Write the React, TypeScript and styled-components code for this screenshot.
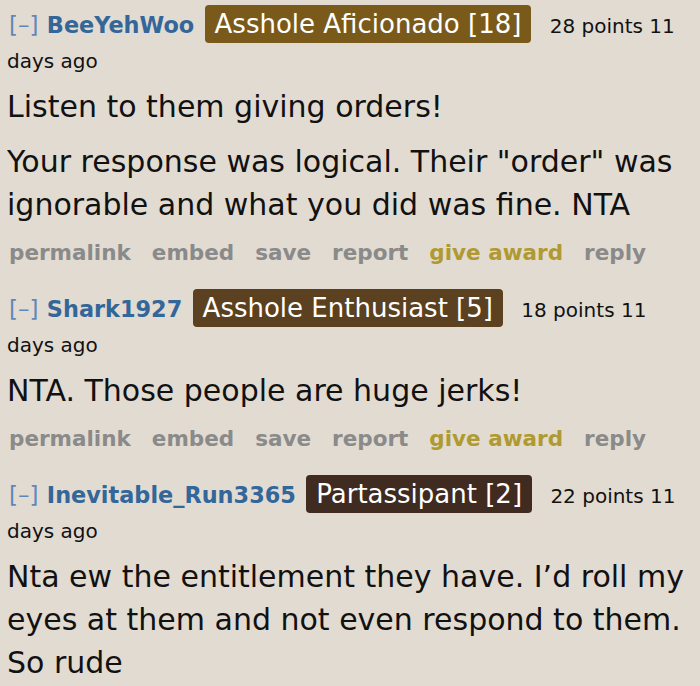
import React from "react";
import styled, { createGlobalStyle } from "styled-components";

const GlobalStyle = createGlobalStyle`
  html, body {
    margin: 0;
    padding: 0;
    background: #e2dbd1;
  }
  body {
    font-family: "DejaVu Sans", Verdana, sans-serif;
    color: #111;
  }
`;

type CommentData = {
  user: string;
  flair: string;
  flairColor: string;
  points: number;
  body: string[];
  showActions: boolean;
};

const comments: CommentData[] = [
  {
    user: "BeeYehWoo",
    flair: "Asshole Aficionado [18]",
    flairColor: "#7a5a1a",
    points: 28,
    body: [
      "Listen to them giving orders!",
      'Your response was logical. Their "order" was ignorable and what you did was fine. NTA',
    ],
    showActions: true,
  },
  {
    user: "Shark1927",
    flair: "Asshole Enthusiast [5]",
    flairColor: "#5b4120",
    points: 18,
    body: ["NTA. Those people are huge jerks!"],
    showActions: true,
  },
  {
    user: "Inevitable_Run3365",
    flair: "Partassipant [2]",
    flairColor: "#3f2b20",
    points: 22,
    body: [
      "Nta ew the entitlement they have. I\u2019d roll my eyes at them and not even respond to them. So rude",
    ],
    showActions: false,
  },
];

const actions = ["permalink", "embed", "save", "report", "give award", "reply"];

function Comment({ data }: { data: CommentData }) {
  return (
    <CommentBox>
      <Tagline>
        <Expand>[–]</Expand> <User>{data.user}</User>{" "}
        <Flair $bg={data.flairColor}>{data.flair}</Flair>{" "}
        <Score>{data.points} points 11 days ago</Score>
      </Tagline>
      <Body>
        {data.body.map((p, i) => (
          <p key={i}>{p}</p>
        ))}
      </Body>
      {data.showActions && (
        <Actions>
          {actions.map((a) => (
            <Action key={a} $gold={a === "give award"}>
              {a}
            </Action>
          ))}
        </Actions>
      )}
    </CommentBox>
  );
}

export default function App() {
  return (
    <>
      <GlobalStyle />
      <Page>
        {comments.map((c) => (
          <Comment key={c.user} data={c} />
        ))}
      </Page>
    </>
  );
}

const Page = styled.div`
  width: 700px;
  height: 686px;
  overflow: hidden;
  padding: 8px 0 0 7px;
  box-sizing: border-box;
`;

const CommentBox = styled.div`
  margin-bottom: 24px;
`;

const Tagline = styled.div`
  font-size: 20px;
  line-height: 35px;
  padding-right: 12px;
`;

const Expand = styled.span`
  color: #5f88ba;
  font-size: 23px;
  padding-left: 2px;
  margin-right: 2px;
`;

const User = styled.span`
  color: #336699;
  font-size: 22.4px;
  font-weight: bold;
`;

const Flair = styled.span<{ $bg: string }>`
  display: inline-block;
  background: ${(p) => p.$bg};
  color: #fff;
  font-size: 26px;
  line-height: 38px;
  padding: 0 10px;
  border-radius: 4px;
  margin: -8px 12px -8px 4px;
`;

const Score = styled.span`
  color: #111;
`;

const Body = styled.div`
  font-size: 30px;
  line-height: 43px;
  margin-top: 6px;

  p {
    margin: 0 0 12px;
  }

  p:last-child {
    margin-bottom: 0;
  }
`;

const Actions = styled.div`
  display: flex;
  gap: 21px;
  margin-top: 12px;
  font-size: 21.5px;
  line-height: 30px;
  font-weight: bold;
  padding-left: 2px;
`;

const Action = styled.span<{ $gold?: boolean }>`
  color: ${(p) => (p.$gold ? "#b09a30" : "#8a8a8a")};
`;
